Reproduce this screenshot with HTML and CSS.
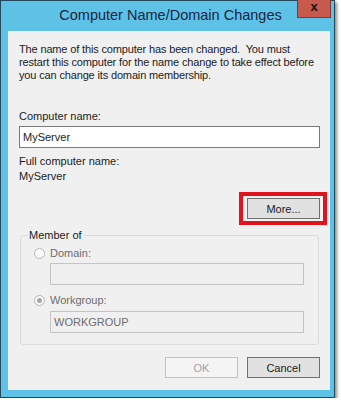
FILE: index.html
```html
<!DOCTYPE html>
<html lang="en">
<head>
    <meta charset="UTF-8">
    <meta name="viewport" content="width=device-width, initial-scale=1.0">
    <title>Computer Name/Domain Changes</title>
    <link rel="stylesheet" href="styles.css">
</head>
<body>
<div class="window">
    <div class="titlebar">
        <span class="title">Computer Name/Domain Changes</span>
        <span class="close">x</span>
    </div>

    <div class="client">
        <p class="msg">The name of this computer has been changed.&nbsp; You must<br>
            restart this computer for the name change to take effect before<br>
            you can change its domain membership.</p>

        <div class="label first">Computer name:</div>
        <div class="textbox">MyServer</div>

        <div class="label full">Full computer name:</div>
        <div class="value">MyServer</div>

        <div class="more-row">
            <div class="highlight">
                <button class="btn">More...</button>
            </div>
        </div>

        <fieldset class="group">
            <legend>Member of</legend>
            <div class="radio-row">
                <span class="radio"></span>
                <span>Domain:</span>
            </div>
            <div class="textbox disabled domain-box"></div>

            <div class="radio-row workgroup">
                <span class="radio checked"></span>
                <span>Workgroup:</span>
            </div>
            <div class="textbox disabled wg-box">WORKGROUP</div>
        </fieldset>

        <div class="buttons">
            <button class="btn off">OK</button>
            <button class="btn">Cancel</button>
        </div>
    </div>
</div>
</body>
</html>
```

FILE: styles.css
```css
* {
    margin: 0;
    padding: 0;
    box-sizing: border-box;
}
body {
    background: #ffffff;
    font-family: 'Liberation Sans', Arial, sans-serif;
    font-size: 11px;
    color: #1b1b1b;
}
.window {
    position: relative;
    width: 335px;
    height: 398px;
    background: #5ec2e7;
    border: 1px solid #24495c;
    box-shadow: 2px 2px 3px rgba(0, 0, 0, 0.45);
    padding: 0 4px 7px 7px;
    display: flex;
    flex-direction: column;
}
.titlebar {
    height: 30px;
    display: flex;
    justify-content: center;
    align-items: center;
}
.title {
    font-size: 14.5px;
    color: #1c2541;
    margin-left: 3px;
    margin-top: -2px;
}
.close {
    position: absolute;
    top: -1px;
    right: 3px;
    width: 34px;
    height: 18px;
    background: #c8594d;
    border: 1px solid #7b3a33;
    border-top: none;
    color: #141414;
    font-weight: bold;
    font-size: 13px;
    line-height: 14px;
    text-align: center;
}
.client {
    flex: 1;
    background: #f0f0f0;
    padding: 12px 10px 0 11px;
    line-height: 13px;
}
.msg {
    white-space: nowrap;
    letter-spacing: -0.15px;
}
.label.first {
    margin-top: 28px;
}
.textbox {
    height: 22px;
    margin-top: 3px;
    border: 1px solid #7a7a7a;
    background: #ffffff;
    padding: 0 3px;
    line-height: 20px;
    font-size: 11px;
}
.label.full {
    margin-top: 7px;
}
.value {
    margin-top: 2px;
}
.more-row {
    display: flex;
    justify-content: flex-end;
    margin-top: 9px;
    margin-right: -7px;
}
.highlight {
    border: 4px solid #e0141e;
    padding: 2px 3px 2px 4px;
}
.btn {
    width: 73px;
    height: 21px;
    border: 1px solid #707070;
    background: #e1e1e1;
    font-family: 'Liberation Sans', Arial, sans-serif;
    font-size: 11px;
    color: #1b1b1b;
}
.btn.off {
    border-color: #c2c2c2;
    background: #f4f4f4;
    color: #a3a3a3;
}
.group {
    margin: 4px 1px 0 1px;
    border: 1px solid #dcdcdc;
    border-radius: 3px;
    padding: 5px 13px 11px 13px;
}
.group legend {
    padding: 0 2px;
    margin-left: -7px;
    line-height: 13px;
}
.radio-row {
    display: flex;
    align-items: center;
    gap: 5px;
    color: #6d6d6d;
}
.radio {
    width: 11px;
    height: 11px;
    border: 1px solid #b4b4b4;
    border-radius: 50%;
    background: #fbfbfb;
    display: flex;
    justify-content: center;
    align-items: center;
}
.radio.checked::after {
    content: "";
    width: 5px;
    height: 5px;
    border-radius: 50%;
    background: #a5a5a5;
}
.textbox.disabled {
    margin-left: 16px;
    width: 254px;
    border-color: #c4c4c4;
    background: #f0f0f0;
    color: #6d6d6d;
}
.domain-box {
    margin-top: 3px;
}
.radio-row.workgroup {
    margin-top: 9px;
}
.wg-box {
    margin-top: 4px;
}
.buttons {
    display: flex;
    justify-content: flex-end;
    gap: 9px;
    margin-top: 12px;
}
```
